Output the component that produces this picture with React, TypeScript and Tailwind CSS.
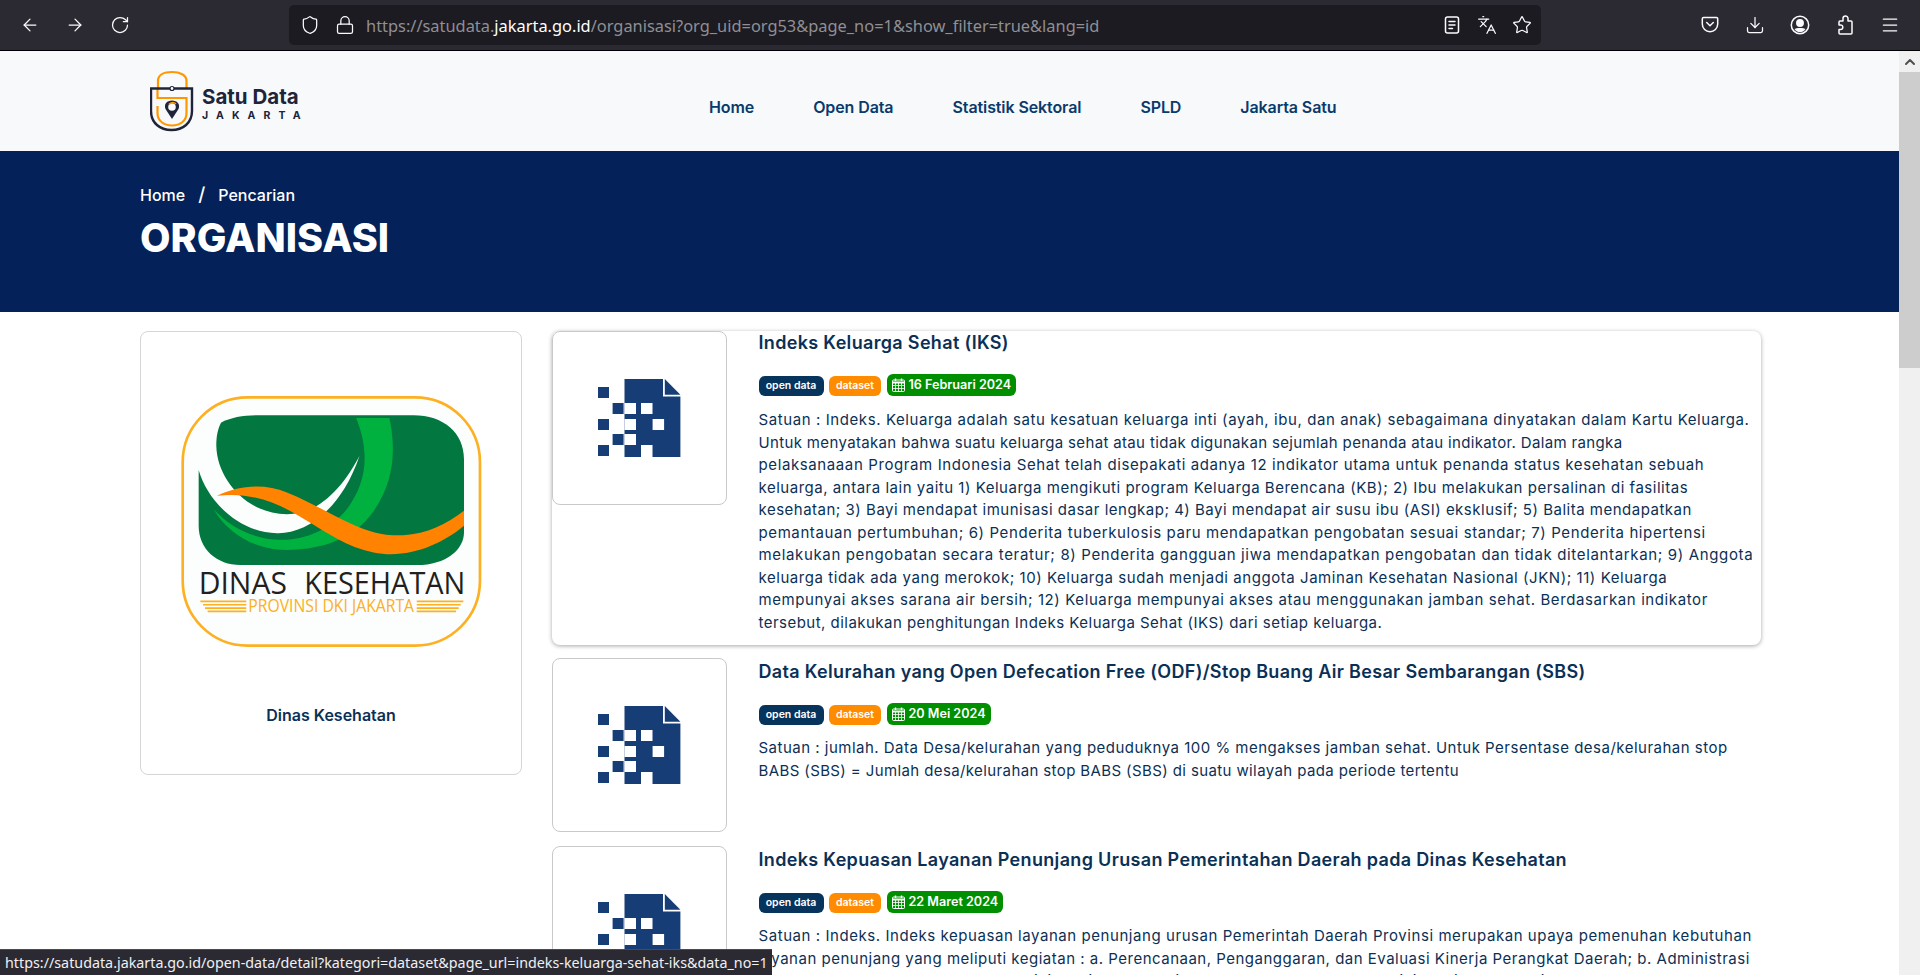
import { ArrowLeft, ArrowRight, RotateCw, Shield, Lock, Languages, Star, Download, Menu, ChevronUp } from "lucide-react";

type Line = [string, string];

type Item = {
  title: string;
  date: string;
  lines: Line[];
  wrap: string;
  pad: string;
  body: string;
};

// tracking is set per line, the substitute font does not have the same word widths as the original
const items: Item[] = [
  {
    title: "Indeks Keluarga Sehat (IKS)",
    date: "16 Februari 2024",
    wrap: "shadow-[0_1px_4px_rgba(0,0,0,0.35)] rounded-lg mb-[13px] h-[314px]",
    pad: "",
    body: "mt-[13px]",
    lines: [
      ["Satuan : Indeks. Keluarga adalah satu kesatuan keluarga inti (ayah, ibu, dan anak) sebagaimana dinyatakan dalam Kartu Keluarga.", "tracking-[0.59px]"],
      ["Untuk menyatakan bahwa suatu keluarga sehat atau tidak digunakan sejumlah penanda atau indikator. Dalam rangka", "tracking-[0.35px]"],
      ["pelaksanaaan Program Indonesia Sehat telah disepakati adanya 12 indikator utama untuk penanda status kesehatan sebuah", "tracking-[0.61px]"],
      ["keluarga, antara lain yaitu 1) Keluarga mengikuti program Keluarga Berencana (KB); 2) Ibu melakukan persalinan di fasilitas", "tracking-[0.52px]"],
      ["kesehatan; 3) Bayi mendapat imunisasi dasar lengkap; 4) Bayi mendapat air susu ibu (ASI) eksklusif; 5) Balita mendapatkan", "tracking-[0.5px]"],
      ["pemantauan pertumbuhan; 6) Penderita tuberkulosis paru mendapatkan pengobatan sesuai standar; 7) Penderita hipertensi", "tracking-[0.6px]"],
      ["melakukan pengobatan secara teratur; 8) Penderita gangguan jiwa mendapatkan pengobatan dan tidak ditelantarkan; 9) Anggota", "tracking-[0.65px]"],
      ["keluarga tidak ada yang merokok; 10) Keluarga sudah menjadi anggota Jaminan Kesehatan Nasional (JKN); 11) Keluarga", "tracking-[0.55px]"],
      ["mempunyai akses sarana air bersih; 12) Keluarga mempunyai akses atau menggunakan jamban sehat. Berdasarkan indikator", "tracking-[0.6px]"],
      ["tersebut, dilakukan penghitungan Indeks Keluarga Sehat (IKS) dari setiap keluarga.", "tracking-[0.47px]"],
    ],
  },
  {
    title: "Data Kelurahan yang Open Defecation Free (ODF)/Stop Buang Air Besar Sembarangan (SBS)",
    date: "20 Mei 2024",
    wrap: "mb-[14px] h-[174px]",
    pad: "pt-[2px]",
    body: "mt-[12px]",
    lines: [
      ["Satuan : jumlah. Data Desa/kelurahan yang peduduknya 100 % mengakses jamban sehat. Untuk Persentase desa/kelurahan stop", "tracking-[0.49px]"],
      ["BABS (SBS) = Jumlah desa/kelurahan stop BABS (SBS) di suatu wilayah pada periode tertentu", "tracking-[0.39px]"],
    ],
  },
  {
    title: "Indeks Kepuasan Layanan Penunjang Urusan Pemerintahan Daerah pada Dinas Kesehatan",
    date: "22 Maret 2024",
    wrap: "h-[174px]",
    pad: "pt-[2px]",
    body: "mt-[12px]",
    lines: [
      ["Satuan : Indeks. Indeks kepuasan layanan penunjang urusan Pemerintah Daerah Provinsi merupakan upaya pemenuhan kebutuhan", "tracking-[0.56px]"],
      ["layanan penunjang yang meliputi kegiatan : a. Perencanaan, Penganggaran, dan Evaluasi Kinerja Perangkat Daerah; b. Administrasi", "tracking-[0.5px]"],
      ["Keuangan Perangkat Daerah; c. Administrasi Kepegawaian Perangkat Daerah; d. Administrasi Kepegawaian Perangkat Daerah;", "tracking-[0.45px]"],
    ],
  },
];

const navLinks = ["Home", "Open Data", "Statistik Sektoral", "SPLD", "Jakarta Satu"];

const PocketIcon = () => (
  <svg width="20" height="20" viewBox="0 0 20 20" fill="none" stroke="currentColor" strokeWidth="1.5" strokeLinecap="round" strokeLinejoin="round">
    <path d="M3.5 2.5h13a1.2 1.2 0 0 1 1.2 1.2V9a7.7 7.7 0 0 1-15.4 0V3.7a1.2 1.2 0 0 1 1.2-1.2z" />
    <path d="M6.7 7.5 10 10.7l3.3-3.2" />
  </svg>
);

const ReaderIcon = () => (
  <svg width="20" height="20" viewBox="0 0 20 20" fill="none" stroke="currentColor" strokeWidth="1.5" strokeLinecap="round">
    <rect x="3.500" y="2" width="13" height="16" rx="2" />
    <path d="M7 6.500h6M7 10h6M7 13.500h3.500" />
  </svg>
);

const AccountIcon = () => (
  <svg width="20" height="20" viewBox="0 0 20 20" fill="none" stroke="currentColor" strokeWidth="1.5">
    <circle cx="10" cy="10" r="8.700" />
    <circle cx="10" cy="8" r="3.200" fill="currentColor" />
    <path d="M4.500 14C6 12.500 14 12.500 15.500 14C14 16.200 12 17.200 10 17.200C8 17.200 6 16.200 4.500 14Z" fill="currentColor" stroke="none" />
  </svg>
);

const ExtensionIcon = () => (
  <svg width="20" height="20" viewBox="0 0 20 20" fill="none" stroke="currentColor" strokeWidth="1.5" strokeLinejoin="round">
    <path d="M8 3.500a2.500 2.500 0 0 1 5 0V6h3a1 1 0 0 1 1 1v11a1 1 0 0 1-1 1H5a1 1 0 0 1-1-1v-3.500h1.500a2.300 2.300 0 0 0 0-4.600H4V7a1 1 0 0 1 1-1h3z" />
  </svg>
);

const CalendarGrid = () => (
  <svg width="13" height="14" viewBox="0 0 13 14" fill="none" stroke="currentColor" strokeWidth="1">
    <rect x="0.500" y="2" width="12" height="11.500" rx="1" />
    <path d="M0.500 4.500h12" strokeWidth="2" />
    <path d="M0.500 7.500h12M0.500 10.500h12M3.500 5v8.500M6.500 5v8.500M9.500 5v8.500" strokeWidth="0.800" />
    <path d="M3.500 0.500v2.500M9.500 0.500v2.500" strokeWidth="1.400" />
  </svg>
);

const SatuDataLogo = () => (
  <svg width="44" height="62" viewBox="150 69 44 62" fill="none">
    <path d="M158 87V80C158 74 164 71 172 71C180 71 186.500 74 186.500 80V87" stroke="#ff9800" strokeWidth="2.200" />
    <path d="M157.500 88V97H186.500V112C186.500 120 180 124.500 172 124.500C164 124.500 157.500 120 157.500 112V105" stroke="#ff9800" strokeWidth="2.200" />
    <path d="M151 87.500H192V110C192 122 183 129 171.500 129C160 129 151 122 151 110V87.500Z" stroke="#20243a" strokeWidth="2.400" />
    <circle cx="172" cy="87.500" r="2" fill="#fff" stroke="#20243a" strokeWidth="1.200" />
    <path d="M172 118L165.500 108C163.500 103 167 99.500 172 99.500C177 99.500 180.500 103 178.500 108Z" fill="#20243a" />
    <circle cx="172" cy="106" r="3.800" fill="#f8f9fa" />
    <path d="M169 103.500A4.500 4.500 0 0 1 176 103" stroke="#ff9800" strokeWidth="1.600" />
  </svg>
);

const DinkesLogo = () => (
  <svg width="303" height="253" viewBox="150 227 908 760" fill="none">
    <rect x="157" y="234" width="893" height="746" rx="195" fill="#fbfefd" stroke="#fdb022" strokeWidth="8" />
    <path d="M272 310C300 295 340 288 380 288H850C940 288 1002 340 1002 420V640C1002 690 950 738 860 738H330C260 738 205 690 205 620V452C230 540 320 640 440 642C520 645 630 580 688 410C640 500 570 585 470 585C350 585 260 480 258 380C258 350 262 330 272 310Z" fill="#02773f" />
    <path d="M678 296H778C800 400 790 500 720 590C650 680 530 695 450 692C370 688 290 640 250 570C300 625 370 660 450 662C530 662 600 630 650 570C710 490 720 400 678 296Z" fill="#00b140" />
    <path d="M260 530C320 500 400 490 470 520C540 548 600 585 660 612C720 640 760 650 820 648C890 645 950 615 1002 575V620C930 680 830 720 730 700C650 685 590 640 530 605C460 560 370 515 260 530Z" fill="#ff8200" />
    <text x="205" y="826" fontSize="92" fill="#231f20" fontFamily="Open Sans" textLength="265" lengthAdjust="spacingAndGlyphs">DINAS</text>
    <text x="522" y="826" fontSize="92" fill="#231f20" fontFamily="Open Sans" textLength="484" lengthAdjust="spacingAndGlyphs">KESEHATAN</text>
    <text x="354" y="880" fontSize="52" fill="#fdb022" fontFamily="Open Sans" textLength="498" lengthAdjust="spacingAndGlyphs">PROVINSI DKI JAKARTA</text>
    <g stroke="#fdb022" strokeWidth="5">
      <path d="M210 847H348M218 857H348M224 867H348M232 877H348" />
      <path d="M860 847H1000M860 857H992M860 867H986M860 877H978" />
    </g>
  </svg>
);

const FileIcon = () => (
  <svg width="83" height="78" viewBox="598 379 83 78">
    <g fill="#163d75">
      <path d="M624.500 379H663V396.500H680.400V457H624.500Z" />
      <path d="M664.800 379L680.400 394.800H664.800Z" />
      <rect x="598" y="387" width="11" height="11" />
      <rect x="612.600" y="403" width="11" height="11" />
      <rect x="598" y="419" width="11" height="11" />
      <rect x="612.600" y="434" width="11" height="11" />
      <rect x="598" y="445" width="11" height="11" />
    </g>
    <g fill="#fff">
      <rect x="624.500" y="403" width="11.500" height="11" />
      <rect x="641" y="403" width="11.500" height="11" />
      <rect x="624.500" y="419" width="11.500" height="11" />
      <rect x="652.600" y="419" width="11.500" height="11" />
      <rect x="624.500" y="434" width="11.500" height="11" />
      <rect x="641" y="445" width="11.500" height="12" />
    </g>
  </svg>
);

const DataRow = ({ item }: { item: Item }) => {
  return (
    <div className={`flex bg-white ${item.wrap}`}>
      <div className="w-[175px] h-[174px] shrink-0 rounded-lg border border-[#c9c9c9] bg-white flex items-center justify-center">
        <FileIcon />
      </div>
      <div className={`ml-[31.5px] min-w-0 ${item.pad}`}>
        <h3 className="text-[18px] leading-[24px] font-semibold text-[#0b3055] whitespace-nowrap tracking-[0.33px]">{item.title}</h3>
        <div className="flex items-end gap-[5.5px] mt-[19px] h-[22px]">
          <span className="h-[20px] w-[65px] rounded-[6px] bg-[#06345c] text-white text-[10.5px] font-semibold flex items-center justify-center">open data</span>
          <span className="h-[20px] w-[52px] rounded-[6px] bg-[#ff8c00] text-white text-[10.5px] font-semibold flex items-center justify-center">dataset</span>
          <span className="h-[22px] rounded-[6px] bg-[#008f00] text-white text-[12.6px] font-semibold flex items-center px-[5px] gap-[4px]">
            <CalendarGrid />
            {item.date}
          </span>
        </div>
        <div className={`${item.body} text-[15px] leading-[22.5px] text-[#0b3055] whitespace-nowrap`}>
          {item.lines.map(([text, tracking]) => (
            <p key={text} className={tracking}>{text}</p>
          ))}
        </div>
      </div>
    </div>
  );
};

export default function App() {
  return (
    <div className="relative h-[975px] w-full overflow-hidden flex flex-col bg-white font-['Inter',sans-serif]">
      <div className="h-[51px] shrink-0 bg-[#2b2a33] border-b border-black flex items-center text-[#fbfbfe]">
        <div className="flex items-center pl-[20px] gap-[25px] w-[289px]">
          <ArrowLeft size={20} strokeWidth={1.5} />
          <ArrowRight size={20} strokeWidth={1.5} />
          <RotateCw size={20} strokeWidth={1.5} />
        </div>
        <div className="w-[1252px] h-[40px] rounded-[5px] bg-[#1c1b22] flex items-center pl-[11px] pr-[9px]">
          <Shield size={20} strokeWidth={1.5} />
          <Lock size={20} strokeWidth={1.5} className="ml-[15px]" />
          <span className="ml-[11px] mt-[2px] text-[16.4px] font-['Noto_Sans',sans-serif] text-[#8f8f94] whitespace-nowrap">
            https://satudata.<span className="text-white">jakarta.go.id</span>/organisasi?org_uid=org53&amp;page_no=1&amp;show_filter=true&amp;lang=id
          </span>
          <div className="ml-auto flex items-center gap-[15px]">
            <ReaderIcon />
            <Languages size={20} strokeWidth={1.5} />
            <Star size={20} strokeWidth={1.5} />
          </div>
        </div>
        <div className="flex-1 flex items-center justify-end gap-[25px] pr-[20px]">
          <PocketIcon />
          <Download size={20} strokeWidth={1.5} />
          <AccountIcon />
          <ExtensionIcon />
          <Menu size={20} strokeWidth={1.5} />
        </div>
      </div>

      <div className="flex flex-1 min-h-0">
        <div className="flex-1 min-w-0 overflow-hidden">
          <header className="h-[100px] bg-[#f8f9fa] flex items-center pl-[150px]">
            <SatuDataLogo />
            <div className="ml-[8px] mt-[7px] text-[#20243a] w-[100px]">
              <div className="text-[20.5px] leading-[22px] font-bold whitespace-nowrap">Satu Data</div>
              <div className="text-[10.5px] leading-[15px] font-bold tracking-[8.1px] whitespace-nowrap">JAKARTA</div>
            </div>
            <nav className="ml-[407px] mt-[12px] flex gap-[59px] text-[16px] font-semibold tracking-[-0.1px] text-[#0a3a6b] whitespace-nowrap">
              {navLinks.map((link) => (
                <a key={link} href="#">{link}</a>
              ))}
            </nav>
          </header>

          <section className="h-[161px] bg-[#04215a] pl-[140px] pt-[32px] text-white">
            <div className="flex items-center text-[16px] font-medium leading-[24px]">
              <span>Home</span>
              <span className="mx-[13px] text-[19px]">/</span>
              <span>Pencarian</span>
            </div>
            <h1 className="text-[39.5px] leading-[46px] font-extrabold mt-[8px]">ORGANISASI</h1>
          </section>

          <main className="flex pl-[140px] pr-[138px] pt-[19px] gap-[30px]">
            <div className="w-[382px] h-[444px] shrink-0 rounded-lg border border-[#d5d5d5] bg-white flex flex-col items-center pt-[63px]">
              <DinkesLogo />
              <p className="mt-[55px] text-[16px] font-semibold text-[#0b3055]">Dinas Kesehatan</p>
            </div>
            <div className="flex-1 min-w-0">
              {items.map((item) => (
                <DataRow key={item.title} item={item} />
              ))}
            </div>
          </main>
        </div>

        <div className="w-[21px] shrink-0 bg-[#f0f0f0] flex flex-col">
          <div className="h-[21px] flex items-center justify-center text-[#505050]">
            <ChevronUp size={16} strokeWidth={3} />
          </div>
          <div className="h-[296px] bg-[#cdcdcd]" />
        </div>
      </div>

      <div className="absolute left-0 bottom-0 w-[772px] h-[26px] bg-[#2b2a33] border-t border-[#4a4a50] flex items-center pl-[5px] text-[14.3px] font-['Noto_Sans',sans-serif] text-[#f0f0f4] whitespace-nowrap">
        https://satudata.jakarta.go.id/open-data/detail?kategori=dataset&amp;page_url=indeks-keluarga-sehat-iks&amp;data_no=1
      </div>
    </div>
  );
}
